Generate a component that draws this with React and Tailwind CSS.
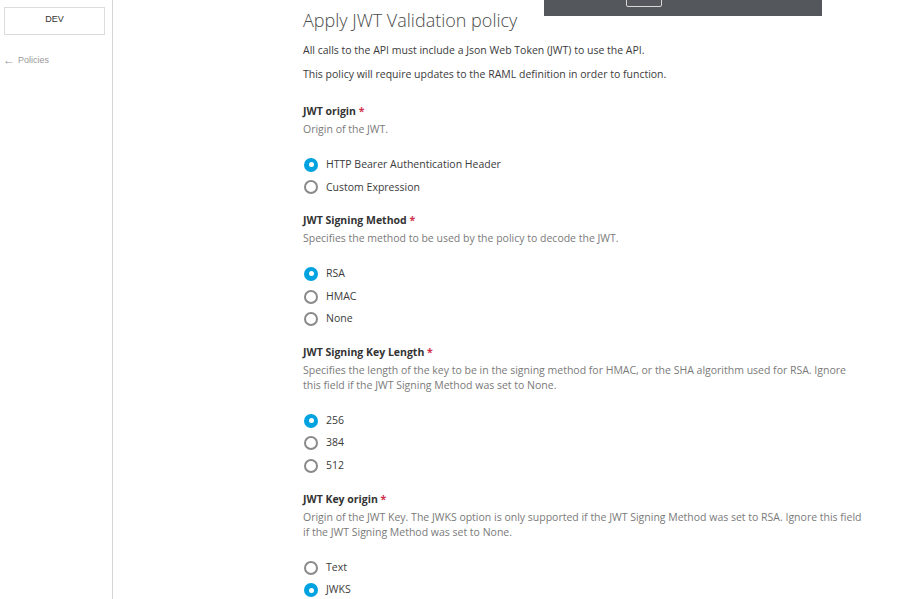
import React, { useState } from 'react';

const sections = [
  {
    id: 'origin',
    label: 'JWT origin',
    desc: ['Origin of the JWT.'],
    options: ['HTTP Bearer Authentication Header', 'Custom Expression'],
    selected: 'HTTP Bearer Authentication Header',
  },
  {
    id: 'method',
    label: 'JWT Signing Method',
    desc: ['Specifies the method to be used by the policy to decode the JWT.'],
    options: ['RSA', 'HMAC', 'None'],
    selected: 'RSA',
  },
  {
    id: 'length',
    label: 'JWT Signing Key Length',
    desc: [
      'Specifies the length of the key to be in the signing method for HMAC, or the SHA algorithm used for RSA. Ignore',
      'this field if the JWT Signing Method was set to None.',
    ],
    options: ['256', '384', '512'],
    selected: '256',
  },
  {
    id: 'keyorigin',
    label: 'JWT Key origin',
    desc: [
      'Origin of the JWT Key. The JWKS option is only supported if the JWT Signing Method was set to RSA. Ignore this field',
      'if the JWT Signing Method was set to None.',
    ],
    options: ['Text', 'JWKS'],
    selected: 'JWKS',
  },
];

const Radio = ({ checked, label, onClick }) => (
  <button onClick={onClick} className="flex items-center h-[22.6px] text-left">
    {checked ? (
      <span className="ml-[1px] w-[14px] h-[14px] rounded-full bg-[#00a2df] flex items-center justify-center">
        <span className="w-[5px] h-[5px] rounded-full bg-white" />
      </span>
    ) : (
      <span className="ml-[1px] w-[14px] h-[14px] rounded-full border-2 border-[#8a8a8a] bg-white" />
    )}
    <span className="ml-[8px] text-[10.5px] text-[#3b3b3b]">{label}</span>
  </button>
);

const App = () => {
  const [values, setValues] = useState(
    Object.fromEntries(sections.map(s => [s.id, s.selected]))
  );

  return (
    <div className="relative flex h-[599px] overflow-hidden bg-white" style={{ fontFamily: '"Open Sans", sans-serif' }}>
      {/* sidebar */}
      <div className="w-[113px] shrink-0 border-r border-[#d4d4d4] pt-[7px] pl-[4px] pr-[7px]">
        <div className="h-[28px] border border-[#dcdcdc] flex items-center justify-center text-[9px] text-[#333] pb-[3px]" style={{ fontFamily: '"Liberation Sans", sans-serif' }}>
          DEV
        </div>
        <div className="mt-[19px] -ml-[1px] flex items-center text-[9px] text-[#9a9a9a]" style={{ fontFamily: '"Liberation Sans", sans-serif' }}>
          <span className="text-[12px] leading-[11px] mr-[3px]">←</span>Policies
        </div>
      </div>

      {/* dark bar over the top */}
      <div className="absolute left-[544px] top-0 w-[278px] h-[16px] bg-[#54575b]">
        <div className="absolute left-[82px] -top-[4px] w-[36px] h-[11px] border border-[#d8d8d8] rounded-[2px]" />
      </div>

      {/* main */}
      <div className="flex-1 pl-[190px] pt-[6px]">
        <h1 className="text-[18px] font-light text-[#4a4a4a] leading-[28px]">Apply JWT Validation policy</h1>
        <p className="mt-[8px] text-[10.5px] text-[#3b3b3b] leading-[16px]">
          All calls to the API must include a Json Web Token (JWT) to use the API.
        </p>
        <p className="mt-[8px] text-[10.5px] text-[#3b3b3b] leading-[16px]">
          This policy will require updates to the RAML definition in order to function.
        </p>

        <div className="mt-[21px] flex flex-col gap-[13.5px]">
          {sections.map(s => (
            <div key={s.id}>
              <div className="text-[10.5px] font-bold text-[#333] leading-[16px]">
                {s.label} <span className="text-[#d0304c]">*</span>
              </div>
              <div className="mt-[3px] text-[10.5px] text-[#7a7a7a] leading-[15px]">
                {s.desc.map((d, i) => (
                  <div key={i}>{d}</div>
                ))}
              </div>
              <div className="mt-[16.5px] flex flex-col">
                {s.options.map(o => (
                  <Radio
                    key={o}
                    label={o}
                    checked={values[s.id] === o}
                    onClick={() => setValues({ ...values, [s.id]: o })}
                  />
                ))}
              </div>
            </div>
          ))}
        </div>
      </div>
    </div>
  );
};

export default App;
